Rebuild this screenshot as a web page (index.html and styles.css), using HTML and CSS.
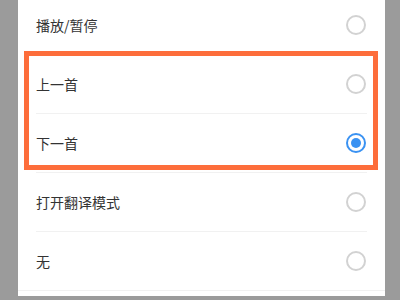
FILE: index.html
```html
<!DOCTYPE html>
<html lang="zh-CN">
<head>
<meta charset="utf-8">
<link rel="stylesheet" href="styles.css">
</head>
<body>
<div class="panel">
  <ul class="list">
    <li class="row"><span class="label">播放/暂停</span><span class="radio"></span></li>
    <li class="row"><span class="label">上一首</span><span class="radio"></span></li>
    <li class="row"><span class="label">下一首</span><span class="radio checked"></span></li>
    <li class="row"><span class="label">打开翻译模式</span><span class="radio"></span></li>
    <li class="row last"><span class="label">无</span><span class="radio"></span></li>
  </ul>
  <div class="highlight"></div>
</div>
</body>
</html>
```
FILE: styles.css
```css
html, body {
  margin: 0;
  padding: 0;
  background: #9b9b9b;
  height: 300px;
  overflow: hidden;
}
.panel {
  position: relative;
  margin: 0 15px 0 18px;
  height: 300px;
  background: #ffffff;
  font-family: "Noto Sans CJK SC", "Noto Sans", sans-serif;
}
.list {
  list-style: none;
  margin: -4px 0 0 0;
  padding: 0;
  border-bottom: 1px solid #f1f1f1;
}
.row {
  display: flex;
  align-items: center;
  justify-content: space-between;
  height: 58px;
  margin: 0 18px;
  border-bottom: 1px solid #f1f1f1;
}
.row.last {
  border-bottom: none;
}
.label {
  font-size: 14px;
  color: #333333;
}
.radio {
  box-sizing: border-box;
  width: 20px;
  height: 20px;
  border: 2px solid #d2d2d2;
  border-radius: 50%;
  margin-right: 1px;
  position: relative;
}
.radio.checked {
  border-color: #3a92f2;
}
.radio.checked::after {
  content: "";
  position: absolute;
  left: 3px;
  top: 3px;
  width: 10px;
  height: 10px;
  border-radius: 50%;
  background: #3a92f2;
}
.highlight {
  position: absolute;
  left: 6px;
  top: 55px;
  width: 344px;
  height: 109px;
  border: 5px solid #fd6d3b;
}
```
